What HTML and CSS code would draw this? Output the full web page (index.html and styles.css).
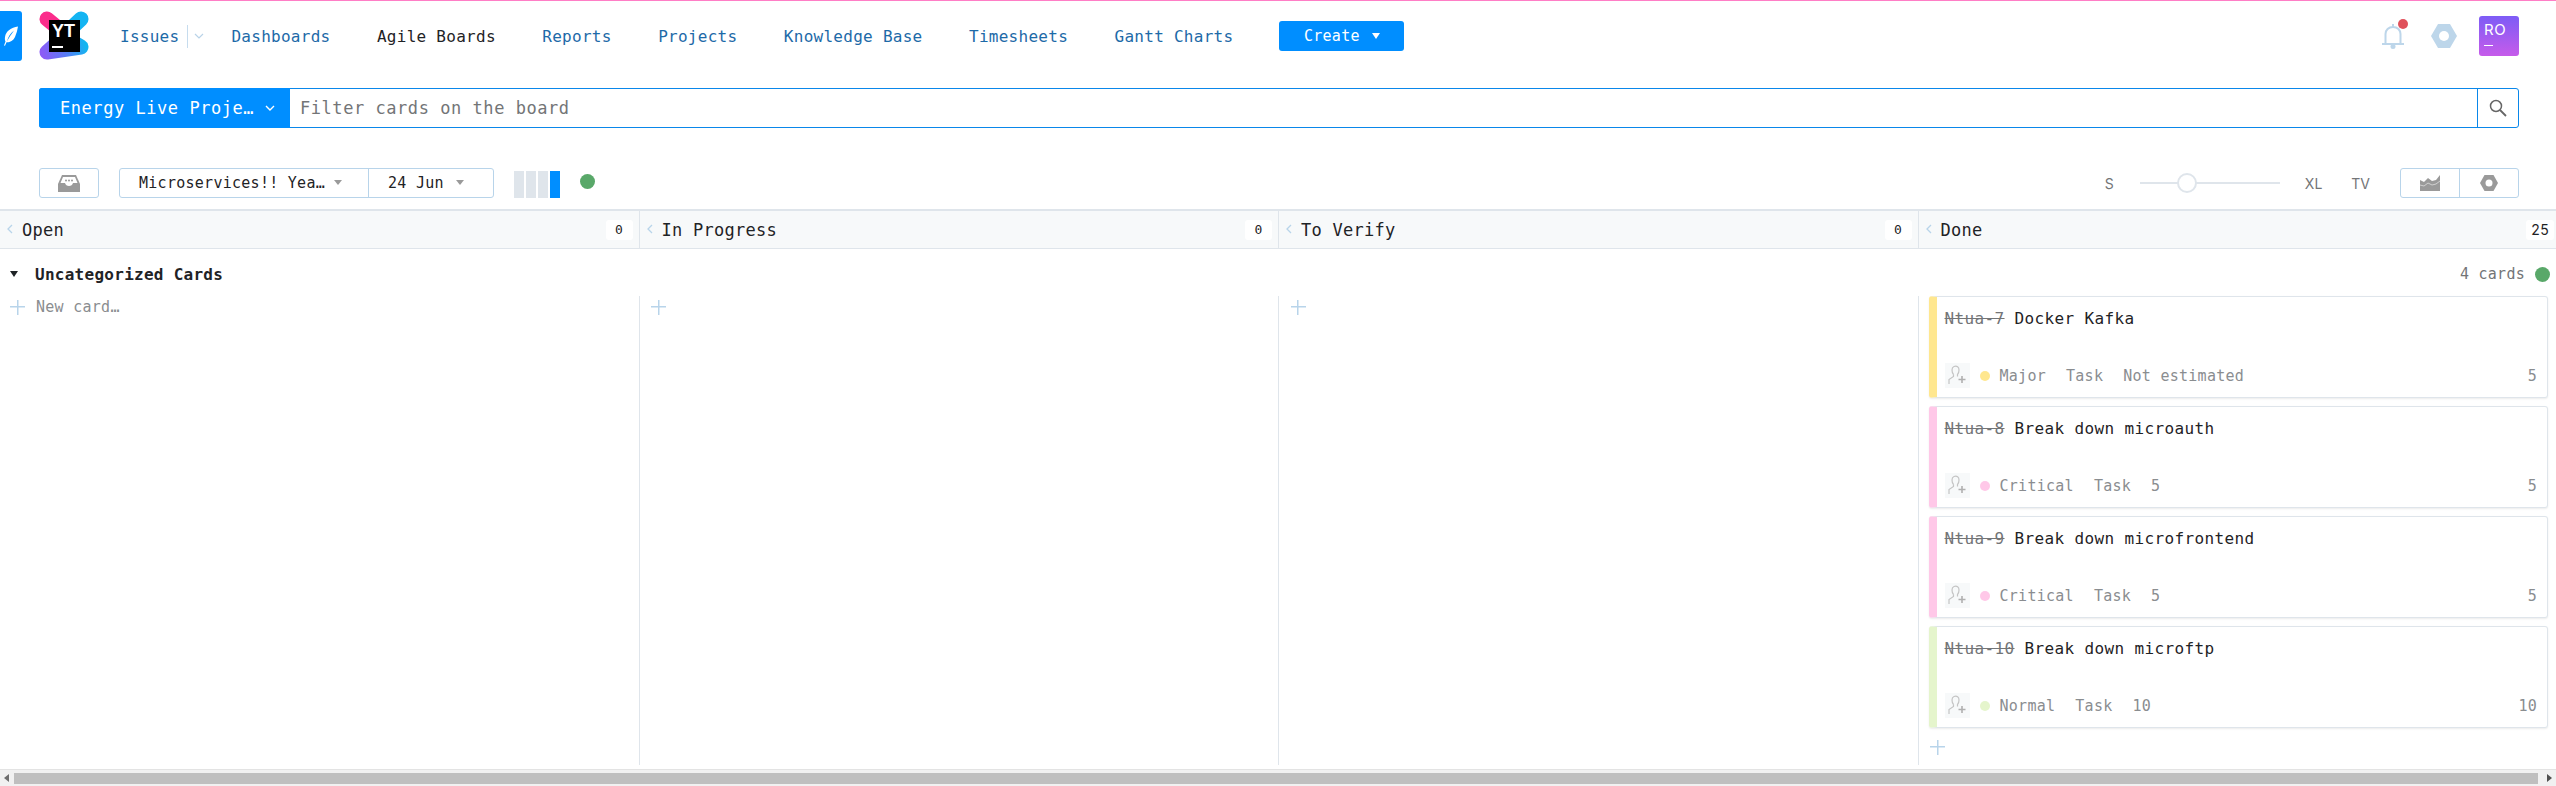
FILE: index.html
```html
<!DOCTYPE html>
<html lang="en">
<head>
  <meta charset="UTF-8" />
  <meta name="viewport" content="width=device-width, initial-scale=1" />
  <title>Agile Boards</title>
  <link rel="stylesheet" href="styles.css">
</head>
<body>

  <div class="topline"></div>

  <header class="header">
    <div class="tab">
      <svg width="16" height="20" viewBox="0 0 16 20"><path d="M15 0.500C8 1.500 3 5 2 11c-.3 2 0 3.500.5 4.500L1 19.500l1 .3 1.500-3.600c3 .3 6.500-1 8.500-5.200 1.500-3.500 2.500-7 3-10.500zM4 15.500C5 11 7.500 7 11 4.500 8.500 8 6 11.500 4 15.500z" fill="#fff" fill-rule="evenodd"/></svg>
    </div>
    <div class="logo">
      <svg width="50" height="50" viewBox="0 0 50 50">
        <defs>
          <linearGradient id="lowerLobe" gradientUnits="userSpaceOnUse" x1="4" y1="44" x2="46" y2="32">
            <stop offset="0" stop-color="#8b5cf6"/>
            <stop offset="0.5" stop-color="#5a7bf5"/>
            <stop offset="1" stop-color="#12b5f0"/>
          </linearGradient>
        </defs>
        <path d="M42 8 L25 24" stroke="#14b4f2" stroke-width="15" stroke-linecap="round"/>
        <path d="M8 8 L25 22" stroke="#fb2d8b" stroke-width="15" stroke-linecap="round"/>
        <path d="M42 36 L25 26 L8 41 Z" fill="url(#lowerLobe)" stroke="url(#lowerLobe)" stroke-width="15" stroke-linejoin="round"/>
      </svg>
      <div class="logo-square">
        <span class="logo-text">YT</span>
        <span class="logo-bar"></span>
      </div>
    </div>

    <nav class="nav">
      <div class="nav-issues">
        <a>Issues</a>
        <span class="nav-divider"></span>
        <svg width="10" height="6" viewBox="0 0 10 6"><path d="M1 1l4 4 4-4" fill="none" stroke="#b9d3e8" stroke-width="1.200"/></svg>
      </div>
      <a>Dashboards</a>
      <a class="active">Agile Boards</a>
      <a>Reports</a>
      <a>Projects</a>
      <a>Knowledge Base</a>
      <a>Timesheets</a>
      <a>Gantt Charts</a>
    </nav>

    <button class="create">Create <span class="create-arrow"></span></button>

    <div class="header-right">
      <div class="bell">
        <svg width="24" height="26" viewBox="0 0 24 26"><path d="M12 1v3M4.500 20V11c0-4 3-7 7.500-7s7.500 3 7.500 7v9M1 21h22" fill="none" stroke="#bdd6ea" stroke-width="2"/><circle cx="12" cy="23.500" r="2.500" fill="#bdd6ea"/></svg>
        <span class="bell-dot"></span>
      </div>
      <svg width="26" height="24" viewBox="0 0 26 24"><path d="M7 0h12l7 12-7 12H7L0 12z" fill="#bdd6ea"/><circle cx="13" cy="12" r="5" fill="#fff"/></svg>
      <div class="avatar">
        <span>RO</span>
        <span class="avatar-bar"></span>
      </div>
    </div>
  </header>

  <div class="search">
    <button class="project">Energy Live Proje… <svg width="10" height="6" viewBox="0 0 10 6"><path d="M1 1l4 4 4-4" fill="none" stroke="#fff" stroke-width="1.400"/></svg></button>
    <div class="query">Filter cards on the board</div>
    <div class="search-btn">
      <svg width="18" height="18" viewBox="0 0 18 18"><circle cx="7" cy="7" r="5.500" fill="none" stroke="#666" stroke-width="1.500"/><path d="M11 11l6 6" stroke="#666" stroke-width="1.800"/></svg>
    </div>
  </div>

  <div class="toolbar">
    <button class="tool-btn inbox">
      <svg width="22" height="17" viewBox="0 0 22 17"><path d="M4 0h14l4 9v8H0V9z" fill="#9a9a9a"/><path d="M5 2h12l2.500 6H15c-.5 2-2 3-4 3s-3.500-1-4-3H2.500z" fill="#fff"/><circle cx="8" cy="5.500" r="1" fill="#9a9a9a"/><circle cx="11" cy="5.500" r="1" fill="#9a9a9a"/><circle cx="14" cy="5.500" r="1" fill="#9a9a9a"/></svg>
    </button>
    <div class="sprint">
      <div class="sprint-name">Microservices!! Yea…<span class="caret"></span></div>
      <div class="sprint-date">24 Jun<span class="caret"></span></div>
    </div>
    <div class="columns-mini">
      <span></span><span></span><span></span><span class="on"></span>
    </div>
    <span class="status-dot"></span>

    <div class="toolbar-right">
      <span class="size-label s">S</span>
      <div class="slider"><span class="knob"></span></div>
      <span class="size-label xl">XL</span>
      <span class="size-label tv">TV</span>
      <div class="view-btns">
        <button>
          <svg width="20" height="16" viewBox="0 0 20 16"><path d="M0 5l4 2 4-4 4 3 4-1 4-5v16H0z" fill="#9a9a9a"/><path d="M0 10l4 1 4-3 4 2 4-1 4-3" fill="none" stroke="#ddd" stroke-width="0.800"/></svg>
        </button>
        <button>
          <svg width="18" height="16" viewBox="0 0 18 16"><path d="M4.500 0h9L18 8l-4.500 8h-9L0 8z" fill="#9a9a9a"/><circle cx="9" cy="8" r="3.500" fill="#fff"/></svg>
        </button>
      </div>
    </div>
  </div>

  <div class="board-head">
    <div class="col-head"><svg class="chev" width="6" height="10" viewBox="0 0 6 10"><path d="M5 1L1 5l4 4" fill="none" stroke="#b8d4ea" stroke-width="1.300"/></svg><span class="col-name">Open</span><span class="count">0</span></div>
    <div class="col-head"><svg class="chev" width="6" height="10" viewBox="0 0 6 10"><path d="M5 1L1 5l4 4" fill="none" stroke="#b8d4ea" stroke-width="1.300"/></svg><span class="col-name">In Progress</span><span class="count">0</span></div>
    <div class="col-head"><svg class="chev" width="6" height="10" viewBox="0 0 6 10"><path d="M5 1L1 5l4 4" fill="none" stroke="#b8d4ea" stroke-width="1.300"/></svg><span class="col-name">To Verify</span><span class="count">0</span></div>
    <div class="col-head"><svg class="chev" width="6" height="10" viewBox="0 0 6 10"><path d="M5 1L1 5l4 4" fill="none" stroke="#b8d4ea" stroke-width="1.300"/></svg><span class="col-name">Done</span><span class="count inter">25</span></div>
  </div>

  <div class="swimlane">
    <span class="lane-arrow"></span>
    <span class="lane-title">Uncategorized Cards</span>
    <span class="lane-count">4 cards</span>
    <span class="status-dot"></span>
  </div>

  <div class="board">
    <div class="col">
      <div class="add"><span class="plus"></span><span class="new-card">New card…</span></div>
    </div>
    <div class="col">
      <div class="add"><span class="plus"></span></div>
    </div>
    <div class="col">
      <div class="add"><span class="plus"></span></div>
    </div>
    <div class="col col-done">
      <div class="card major">
        <div class="card-body">
          <div class="card-title"><s>Ntua-7</s> Docker Kafka</div>
          <div class="card-foot">
            <span class="assignee"><svg width="19" height="21" viewBox="0 0 19 21"><path d="M6 1.500c3-1 5 .5 5 3.500 0 2-.5 3.500-1.500 4.500v2M5.500 9.500c-1-1-1.500-2.500-1.500-4.500 0-1.500 .8-3 2-3.500M5.500 9.500v2L1 14.500V19" fill="none" stroke="#c4c4c4" stroke-width="1.200"/><path d="M14 11v7M10.500 14.500h7" stroke="#b0b0b0" stroke-width="1.600"/></svg></span>
            <span class="dot"></span>
            <span>Major</span><span>Task</span><span>Not estimated</span>
            <span class="points">5</span>
          </div>
        </div>
      </div>
      <div class="card critical">
        <div class="card-body">
          <div class="card-title"><s>Ntua-8</s> Break down microauth</div>
          <div class="card-foot">
            <span class="assignee"><svg width="19" height="21" viewBox="0 0 19 21"><path d="M6 1.500c3-1 5 .5 5 3.500 0 2-.5 3.500-1.500 4.500v2M5.500 9.500c-1-1-1.500-2.500-1.500-4.500 0-1.500 .8-3 2-3.500M5.500 9.500v2L1 14.500V19" fill="none" stroke="#c4c4c4" stroke-width="1.200"/><path d="M14 11v7M10.500 14.500h7" stroke="#b0b0b0" stroke-width="1.600"/></svg></span>
            <span class="dot"></span>
            <span>Critical</span><span>Task</span><span>5</span>
            <span class="points">5</span>
          </div>
        </div>
      </div>
      <div class="card critical">
        <div class="card-body">
          <div class="card-title"><s>Ntua-9</s> Break down microfrontend</div>
          <div class="card-foot">
            <span class="assignee"><svg width="19" height="21" viewBox="0 0 19 21"><path d="M6 1.500c3-1 5 .5 5 3.500 0 2-.5 3.500-1.500 4.500v2M5.500 9.500c-1-1-1.500-2.500-1.500-4.500 0-1.500 .8-3 2-3.500M5.500 9.500v2L1 14.500V19" fill="none" stroke="#c4c4c4" stroke-width="1.200"/><path d="M14 11v7M10.500 14.500h7" stroke="#b0b0b0" stroke-width="1.600"/></svg></span>
            <span class="dot"></span>
            <span>Critical</span><span>Task</span><span>5</span>
            <span class="points">5</span>
          </div>
        </div>
      </div>
      <div class="card normal">
        <div class="card-body">
          <div class="card-title"><s>Ntua-10</s> Break down microftp</div>
          <div class="card-foot">
            <span class="assignee"><svg width="19" height="21" viewBox="0 0 19 21"><path d="M6 1.500c3-1 5 .5 5 3.500 0 2-.5 3.500-1.500 4.500v2M5.500 9.500c-1-1-1.500-2.500-1.500-4.500 0-1.500 .8-3 2-3.500M5.500 9.500v2L1 14.500V19" fill="none" stroke="#c4c4c4" stroke-width="1.200"/><path d="M14 11v7M10.500 14.500h7" stroke="#b0b0b0" stroke-width="1.600"/></svg></span>
            <span class="dot"></span>
            <span>Normal</span><span>Task</span><span>10</span>
            <span class="points">10</span>
          </div>
        </div>
      </div>
      <div class="add add-done"><span class="plus"></span></div>
    </div>
  </div>

  <div class="scrollbar">
    <span class="sb-arrow left"></span>
    <span class="sb-thumb"></span>
    <span class="sb-arrow right"></span>
  </div>

</body>
</html>
```

FILE: styles.css
```css
* {
  box-sizing: border-box;
}
html, body {
  height: 786px;
}
body {
  margin: 0;
  font-family: "DejaVu Sans Mono", monospace;
  font-size: 16px;
  letter-spacing: 0.27px;
  color: #1f2326;
  background: #fff;
  display: flex;
  flex-direction: column;
  overflow: hidden;
}
button {
  font: inherit;
  letter-spacing: inherit;
  border: none;
  padding: 0;
  background: none;
}

.topline {
  height: 1px;
  background: #ff7ec6;
}

/* header */
.header {
  height: 70px;
  display: flex;
  align-items: center;
  padding-right: 37px;
}
.tab {
  width: 22px;
  height: 50px;
  background: #008eff;
  border-radius: 0 3px 3px 0;
  display: flex;
  align-items: center;
  justify-content: center;
}
.logo {
  width: 50px;
  height: 50px;
  margin-left: 17px;
  position: relative;
}
.logo svg {
  display: block;
}
.logo-square {
  position: absolute;
  left: 10px;
  top: 9px;
  width: 31px;
  height: 32px;
  background: #000;
  color: #fff;
  padding: 3px 3px;
  display: flex;
  flex-direction: column;
  justify-content: space-between;
}
.logo-text {
  font-family: "Liberation Sans", sans-serif;
  font-weight: bold;
  font-size: 18px;
  line-height: 16px;
  letter-spacing: 0;
}
.logo-bar {
  width: 11px;
  height: 2px;
  margin-bottom: 1px;
  background: #fff;
}
.nav {
  display: flex;
  align-items: center;
  gap: 46.500px;
  margin-left: 31px;
  color: #1d6aa8;
}
.nav .active {
  color: #1f2326;
}
.nav-issues {
  display: flex;
  align-items: center;
  margin-right: -19.500px;
}
.nav-divider {
  width: 1px;
  height: 23px;
  margin: 0 6px 0 8px;
  background: #c6dcee;
}
.create {
  margin-left: 46px;
  width: 125px;
  height: 30px;
  background: #008eff;
  color: #fff;
  border-radius: 3px;
  font-size: 15px;
  display: flex;
  align-items: center;
  justify-content: center;
  gap: 12px;
}
.create-arrow {
  width: 0;
  height: 0;
  border-left: 4.500px solid transparent;
  border-right: 4.500px solid transparent;
  border-top: 6px solid #fff;
}
.header-right {
  margin-left: auto;
  display: flex;
  align-items: center;
}
.bell {
  position: relative;
  height: 26px;
  margin-right: 26px;
}
.bell-dot {
  position: absolute;
  top: -4px;
  right: -3px;
  width: 10px;
  height: 10px;
  border-radius: 50%;
  background: #e0515b;
}
.avatar {
  width: 40px;
  height: 40px;
  margin-left: 22px;
  border-radius: 3px;
  background: linear-gradient(#7d5cf6, #c65bea);
  color: #fff;
  font-family: Inter, sans-serif;
  font-size: 15px;
  letter-spacing: 0.500px;
  padding: 5px 5px;
  display: flex;
  flex-direction: column;
  gap: 7px;
  line-height: 17px;
}
.avatar-bar {
  width: 9px;
  height: 1px;
  background: #fff;
}

/* search */
.search {
  height: 40px;
  margin: 17px 37px 0 39px;
  display: flex;
  border: 1px solid #0a87ea;
  border-radius: 3px;
}
.project {
  width: 251px;
  margin: -1px 0 -1px -1px;
  padding-left: 21px;
  background: #008eff;
  color: #fff;
  border-radius: 3px 0 0 3px;
  font-size: 17px;
  letter-spacing: 0.550px;
  text-align: left;
  display: flex;
  align-items: center;
  white-space: pre;
}
.query {
  flex: 1;
  padding-left: 10px;
  color: #737577;
  font-size: 17px;
  letter-spacing: 0.550px;
  line-height: 39px;
}
.search-btn {
  width: 41px;
  border-left: 1px solid #0a87ea;
  display: flex;
  align-items: center;
  justify-content: center;
}

/* toolbar */
.toolbar {
  height: 30px;
  margin: 40px 37px 0 39px;
  display: flex;
  align-items: center;
  font-size: 15px;
}
.tool-btn {
  width: 60px;
  height: 30px;
  border: 1px solid #b8d4ea;
  border-radius: 3px;
  display: flex;
  align-items: center;
  justify-content: center;
}
.sprint {
  height: 30px;
  margin-left: 20px;
  display: flex;
  border: 1px solid #b8d4ea;
  border-radius: 3px;
}
.sprint-name {
  width: 249px;
  padding-left: 19px;
  line-height: 28px;
  border-right: 1px solid #b8d4ea;
  display: flex;
  align-items: center;
  white-space: pre;
}
.sprint-date {
  width: 124px;
  padding-left: 19px;
  display: flex;
  align-items: center;
  white-space: pre;
}
.caret {
  width: 0;
  height: 0;
  margin-left: 9px;
  margin-top: -2px;
  border-left: 4px solid transparent;
  border-right: 4px solid transparent;
  border-top: 5px solid #9a9a9a;
}
.sprint-date .caret {
  margin-left: 12px;
}
.columns-mini {
  height: 27px;
  margin: 3px 0 0 20px;
  display: flex;
  gap: 2px;
}
.columns-mini span {
  width: 10px;
  background: #dfe5eb;
}
.columns-mini .on {
  background: #008eff;
}
.status-dot {
  width: 15px;
  height: 15px;
  border-radius: 50%;
  background: #59a869;
}
.toolbar > .status-dot {
  margin: -4px 0 0 20px;
}
.toolbar-right {
  margin-left: auto;
  display: flex;
  align-items: center;
  font-family: Inter, sans-serif;
  font-size: 14px;
  color: #737577;
  letter-spacing: 0;
}
.slider {
  position: relative;
  width: 140px;
  height: 2px;
  margin: 0 25px 0 26px;
  background: #dfe5eb;
}
.knob {
  position: absolute;
  left: 37px;
  top: -9px;
  width: 20px;
  height: 20px;
  border-radius: 50%;
  border: 2px solid #dfe5eb;
  background: #fff;
}
.size-label.tv {
  margin: 0 30px 0 29px;
}
.view-btns {
  width: 119px;
  height: 30px;
  display: flex;
  border: 1px solid #b8d4ea;
  border-radius: 3px;
}
.view-btns button {
  flex: 1;
  display: flex;
  align-items: center;
  justify-content: center;
}
.view-btns button + button {
  border-left: 1px solid #b8d4ea;
}

/* board */
.board-head {
  height: 40px;
  margin-top: 11px;
  display: grid;
  grid-template-columns: repeat(4, 639.500px);
  background: #f7f9fa;
  border-top: 2px solid #dfe5eb;
  border-bottom: 1px solid #dfe5eb;
}
.col-head {
  display: flex;
  align-items: center;
  padding: 0 6px 0 7px;
  border-right: 1px solid #dfe5eb;
  font-size: 17px;
}
.col-head:last-child {
  border-right: none;
}
.chev {
  margin-right: 9px;
  margin-top: -2px;
}
.count {
  margin-left: auto;
  min-width: 27px;
  height: 20px;
  padding: 0 5px;
  background: #fff;
  border-radius: 3px;
  font-size: 13px;
  line-height: 20px;
  text-align: center;
}
.count.inter {
  font-family: Inter, sans-serif;
  font-size: 14px;
  letter-spacing: 0.300px;
  margin-right: -2px;
}
.swimlane {
  height: 47px;
  display: flex;
  align-items: center;
  padding: 3px 6px 0 10px;
}
.lane-arrow {
  width: 0;
  height: 0;
  border-left: 4.500px solid transparent;
  border-right: 4.500px solid transparent;
  border-top: 6px solid #1f2326;
}
.lane-title {
  margin-left: 17px;
  font-weight: bold;
  letter-spacing: 0.270px;
}
.lane-count {
  margin-left: auto;
  margin-right: 10px;
  font-size: 15px;
  color: #737577;
}
.board {
  height: 469px;
  display: grid;
  grid-template-columns: repeat(4, 639.500px);
}
.col {
  border-right: 1px solid #dfe5eb;
  padding: 0 10px;
  min-width: 0;
}
.col:last-child {
  border-right: none;
}
.add {
  height: 22px;
  display: flex;
  align-items: center;
  gap: 11px;
}
.col:not(:first-child) .add {
  margin-left: 1.500px;
}
.plus {
  display: block;
  width: 15px;
  height: 15px;
  background: linear-gradient(#b8d4ea, #b8d4ea) center / 15px 1.500px no-repeat,
    linear-gradient(#b8d4ea, #b8d4ea) center / 1.500px 15px no-repeat;
}
.new-card {
  color: #8a8d90;
  font-size: 15px;
}
.card {
  height: 102px;
  margin-bottom: 8px;
  display: flex;
  border: 1px solid #dfe5eb;
  border-left-width: 8px;
  border-radius: 3px;
  box-shadow: 0 1px 2px rgba(0, 0, 0, 0.08);
}
.card.major {
  border-left-color: #ffe78f;
}
.card.critical {
  border-left-color: #ffc8e8;
}
.card.normal {
  border-left-color: #e5f5cc;
}
.card-body {
  flex: 1;
  padding: 12px 10px 9px 8px;
  display: flex;
  flex-direction: column;
  justify-content: space-between;
}
.card-title {
  letter-spacing: 0.370px;
  line-height: 20px;
}
.card-title s {
  color: #737577;
}
.card-foot {
  height: 25px;
  display: flex;
  align-items: center;
  gap: 20px;
  font-size: 15px;
  color: #8a8d90;
}
.assignee {
  width: 25px;
  height: 25px;
  margin-right: -10px;
  background: #f7f9fa;
  display: flex;
  align-items: center;
  justify-content: center;
}
.dot {
  width: 10px;
  height: 10px;
  margin-right: -10px;
  border-radius: 50%;
}
.major .dot {
  background: #ffe78f;
}
.critical .dot {
  background: #ffc8e8;
}
.normal .dot {
  background: #e5f5cc;
}
.points {
  margin-left: auto;
}
.col-done .add {
  margin-left: 0;
}

/* scrollbar */
.scrollbar {
  height: 17px;
  margin-top: 4px;
  display: flex;
  align-items: center;
  background: #f1f1f1;
  border-top: 1px solid #e3e3e3;
}
.sb-thumb {
  flex: 1;
  height: 11px;
  margin: 0 9px 0 5px;
  background: #bfbfbf;
}
.sb-arrow {
  width: 0;
  height: 0;
  border-top: 4px solid transparent;
  border-bottom: 4px solid transparent;
}
.sb-arrow.left {
  margin-left: 4px;
  border-right: 5px solid #6e6e6e;
}
.sb-arrow.right {
  margin-right: 4px;
  border-left: 5px solid #505050;
}
```
